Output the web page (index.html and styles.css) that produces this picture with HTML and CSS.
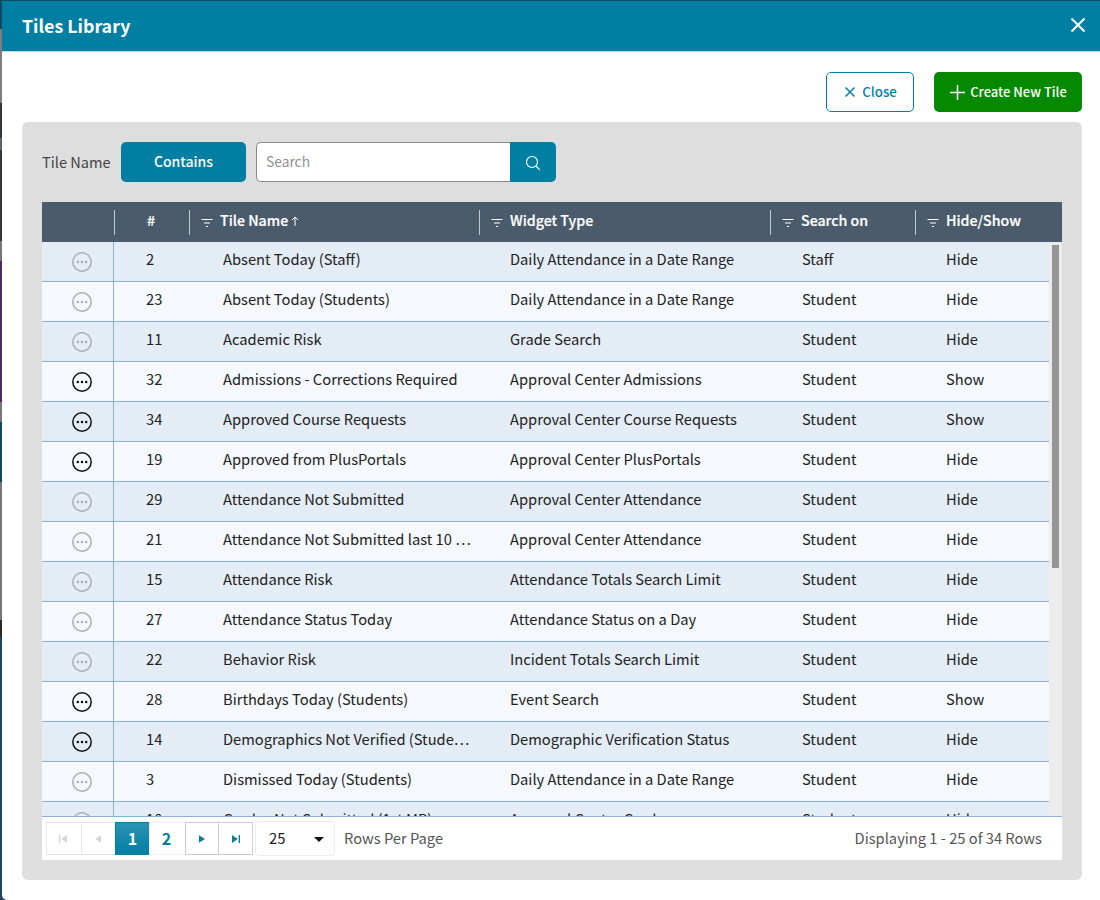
FILE: index.html
```html
<!DOCTYPE html>
<html lang="en">
<head>
<meta charset="utf-8">
<title>Tiles Library</title>
<link rel="stylesheet" href="styles.css">
</head>
<body>
<div class="modal">
  <header class="modal-head">
    <h1>Tiles Library</h1>
    <svg class="head-x" width="16" height="16" viewBox="0 0 16 16"><path d="M1.500 1.500l13 13M14.500 1.500l-13 13"/></svg>
  </header>
  <div class="actions">
    <button class="btn-close"><svg width="12" height="12" viewBox="0 0 12 12"><path d="M1.500 1.500l9 9M10.500 1.500l-9 9"/></svg><span>Close</span></button>
    <button class="btn-create"><svg width="17" height="17" viewBox="0 0 17 17"><path d="M8.500 1v15M1 8.500h15"/></svg><span>Create New Tile</span></button>
  </div>
  <section class="panel">
    <div class="filter">
      <span class="filter-label">Tile Name</span>
      <button class="contains">Contains</button>
      <div class="search">
        <span class="search-input">Search</span>
        <span class="search-btn"><svg width="16" height="16" viewBox="0 0 16 16"><circle cx="7" cy="7" r="5.500"/><path d="M11 11l3.800 3.800"/></svg></span>
      </div>
    </div>
    <div class="grid">
      <div class="thead">
        <div class="th c0"></div>
        <div class="th c1"><span class="sep"></span><span class="hash">#</span></div>
        <div class="th c2"><span class="sep"></span><svg class="flt" width="12" height="10" viewBox="0 0 12 10"><path d="M.5 1.500h11M3 5h6M5 8.500h2"/></svg>Tile Name<svg class="arrow" width="8" height="10" viewBox="0 0 8 10"><path d="M4 10V1M1 4l3-3 3 3"/></svg></div>
        <div class="th c3"><span class="sep"></span><svg class="flt" width="12" height="10" viewBox="0 0 12 10"><path d="M.5 1.500h11M3 5h6M5 8.500h2"/></svg>Widget Type</div>
        <div class="th c4"><span class="sep"></span><svg class="flt" width="12" height="10" viewBox="0 0 12 10"><path d="M.5 1.500h11M3 5h6M5 8.500h2"/></svg>Search on</div>
        <div class="th c5"><span class="sep"></span><svg class="flt" width="12" height="10" viewBox="0 0 12 10"><path d="M.5 1.500h11M3 5h6M5 8.500h2"/></svg>Hide/Show</div>
      </div>
      <div class="body">
        <div class="rows" id="rows"></div>
        <div class="scroll"><div class="thumb"></div></div>
      </div>
      <div class="pager">
        <div class="pages">
          <span class="pg dis"><svg width="8" height="8" viewBox="0 0 9 9"><path d="M0 0h1.500v9H0zM9 0v9L2.500 4.500z"/></svg></span>
          <span class="pg dis"><svg width="6" height="8" viewBox="0 0 7 9"><path d="M7 0v9L0 4.500z"/></svg></span>
          <span class="pg cur">1</span>
          <span class="pg num">2</span>
          <span class="pg nav"><svg width="6" height="8" viewBox="0 0 7 9"><path d="M0 0v9l7-4.500z"/></svg></span>
          <span class="pg nav"><svg width="8" height="8" viewBox="0 0 9 9"><path d="M0 0v9l6.500-4.500zM7.500 0H9v9H7.500z"/></svg></span>
        </div>
        <div class="size"><span>25</span><i class="caret"></i></div>
        <span class="rpp">Rows Per Page</span>
        <span class="count">Displaying 1 - 25 of 34 Rows</span>
      </div>
    </div>
  </section>
</div>
<script src="app.js"></script>
</body>
</html>
```
FILE: app.js
```js
var data = [
  [0,"2","Absent Today (Staff)","Daily Attendance in a Date Range","Staff","Hide"],
  [0,"23","Absent Today (Students)","Daily Attendance in a Date Range","Student","Hide"],
  [0,"11","Academic Risk","Grade Search","Student","Hide"],
  [1,"32","Admissions - Corrections Required","Approval Center Admissions","Student","Show"],
  [1,"34","Approved Course Requests","Approval Center Course Requests","Student","Show"],
  [1,"19","Approved from PlusPortals","Approval Center PlusPortals","Student","Hide"],
  [0,"29","Attendance Not Submitted","Approval Center Attendance","Student","Hide"],
  [0,"21","Attendance Not Submitted last 10 Days","Approval Center Attendance","Student","Hide"],
  [0,"15","Attendance Risk","Attendance Totals Search Limit","Student","Hide"],
  [0,"27","Attendance Status Today","Attendance Status on a Day","Student","Hide"],
  [0,"22","Behavior Risk","Incident Totals Search Limit","Student","Hide"],
  [1,"28","Birthdays Today (Students)","Event Search","Student","Show"],
  [1,"14","Demographics Not Verified (Students)","Demographic Verification Status","Student","Hide"],
  [0,"3","Dismissed Today (Students)","Daily Attendance in a Date Range","Student","Hide"],
  [0,"10","Grades Not Submitted (1st MP)","Approval Center Grades","Student","Hide"]
];
var icon = function (on) {
  return '<svg class="more ' + (on ? 'on' : 'off') + '" width="20" height="20" viewBox="0 0 20 20"><circle class="ring" cx="10" cy="10" r="9.200"/><circle class="dot" cx="5.800" cy="10" r="1.250"/><circle class="dot" cx="10" cy="10" r="1.250"/><circle class="dot" cx="14.200" cy="10" r="1.250"/></svg>';
};
document.getElementById('rows').innerHTML = data.map(function (r) {
  return '<div class="row"><div class="td c0">' + icon(r[0]) + '</div><div class="td c1">' + r[1] +
    '</div><div class="td c2"><span class="clip">' + r[2] + '</span></div><div class="td c3">' + r[3] +
    '</div><div class="td c4">' + r[4] + '</div><div class="td c5">' + r[5] + '</div></div>';
}).join('');
```
FILE: styles.css
```css
* { box-sizing: border-box; }
html, body { margin: 0; height: 100%; }
body {
  background: linear-gradient(to bottom,
    #0f4a5e 0 29px, #7d7d7d 29px 103px, #363636 103px 138px, #5b6672 138px 150px,
    #363636 150px 241px, #777 241px 261px, #4b2a5c 261px 402px, #777 402px 422px,
    #0d4a5a 422px 482px, #777 482px 620px, #2a2a2a 620px 637px, #1f4560 637px 900px);
  overflow: hidden;
  font-family: "Noto Sans CJK SC", "Noto Sans", sans-serif;
  font-size: 14.7px;
  color: #222;
}
.modal {
  margin: 1px 0 0 2px;
  height: 899px;
  background: #fff;
  display: flex;
  flex-direction: column;
  border-bottom-left-radius: 5px;
}
.modal-head {
  flex: none;
  height: 51px;
  background: #007fa3;
  border-bottom: 1px solid #c5d3d9;
  display: flex;
  align-items: center;
  justify-content: space-between;
  padding: 0 14px 2px 20px;
}
.modal-head h1 { margin: 0; font-size: 17.800px; line-height: 26px; font-weight: 700; color: #fff; }
.head-x path { stroke: #fff; stroke-width: 2; fill: none; }
.actions {
  flex: none;
  height: 70px;
  padding: 20px 18px 0 0;
  display: flex;
  justify-content: flex-end;
  gap: 20px;
}
button { font-family: inherit; cursor: pointer; }
.btn-close, .btn-create {
  height: 40px;
  border-radius: 5px;
  font-weight: 500;
  display: flex;
  align-items: center;
  justify-content: center;
  padding: 0;
}
.btn-close span, .btn-create span { padding-bottom: 2px; }
.btn-close { width: 88px; background: #fff; border: 1px solid #007fa3; color: #007fa3; gap: 6px; font-size: 13.3px; padding-left: 1px; }
.btn-close path { stroke: #007fa3; stroke-width: 1.500; fill: none; }
.btn-create { width: 148px; background: #058900; border: 0; color: #fff; gap: 4px; font-size: 13px; }
.btn-create path { stroke: #fff; stroke-width: 1.500; fill: none; }
.panel {
  margin: 0 18px 0 20px;
  height: 758px;
  background: #dedede;
  border-radius: 6px;
  padding: 20px;
}
.filter { display: flex; align-items: center; height: 40px; }
.filter-label { width: 79px; font-size: 14.6px; color: #444; padding-bottom: 2px; }
.contains {
  width: 125px;
  height: 40px;
  border: 0;
  border-radius: 5px;
  background: #007fa3;
  color: #fff;
  font-size: 14px;
  font-weight: 500;
  padding: 0 0 2px;
}
.search { margin-left: 10px; width: 300px; height: 40px; display: flex; }
.search-input {
  flex: 1;
  background: #fff;
  border: 1px solid #8a8a8a;
  border-right: 0;
  border-radius: 5px 0 0 5px;
  padding: 0 9px;
  line-height: 36px;
  font-size: 13.800px;
  color: #8f8f8f;
}
.search-btn {
  width: 46px;
  background: #007fa3;
  border-radius: 0 5px 5px 0;
  display: flex;
  align-items: center;
  justify-content: center;
  padding-top: 1px;
}
.search-btn circle, .search-btn path { stroke: #fff; stroke-width: 1.200; fill: none; }
.grid { margin-top: 20px; }
.thead { display: flex; height: 40px; background: #4a5b6c; color: #fff; font-weight: 500; font-size: 14.2px; -webkit-text-stroke: .2px #fff; }
.th { display: flex; align-items: center; position: relative; line-height: 20px; padding-bottom: 4px; }
.sep { position: absolute; left: 0; top: 8px; height: 25px; width: 1px; background: #c3cad0; }
.flt { margin-right: 7px; margin-top: 5px; }
.flt path { stroke: #fff; stroke-width: 1.200; fill: none; }
.arrow { margin-left: 3px; margin-top: 2px; }
.arrow path { stroke: #fff; stroke-width: 1; fill: none; }
.th.c0 { width: 72px; }
.th.c1 { width: 75px; padding-left: 33px; }
.th.c2 { width: 290px; padding-left: 12px; }
.th.c3 { width: 291px; padding-left: 12px; }
.th.c4 { width: 145px; padding-left: 12px; }
.th.c5 { flex: 1; padding-left: 12px; }
.body { display: flex; height: 574px; overflow: hidden; background: #fff; }
.rows { width: 1007px; flex: none; }
.row {
  display: flex;
  height: 40px;
  border-bottom: 1px solid #8fb0d6;
  background: #f5f9fd;
  line-height: 20px;
  color: #222;
}
.row:nth-child(odd) { background: #e4ecf6; }
.td { display: flex; align-items: center; height: 39px; padding-bottom: 5px; white-space: nowrap; }
.td.c0 { width: 72px; border-right: 1px solid #8fb0d6; padding: 1px 0 0 30px; }
.td.c1 { width: 75px; padding-left: 32px; }
.td.c2 { width: 321px; padding-left: 34px; padding-right: 39px; }
.td.c3 { width: 292px; }
.td.c4 { width: 144px; }
.td.c5 { flex: 1; }
.clip { display: block; width: 100%; overflow: hidden; text-overflow: ellipsis; font-feature-settings: "pwid" 1; }
.more { display: block; }
.more .ring { fill: none; stroke-width: 1.500; }
.more.off .ring { stroke: #a9adb2; }
.more.off .dot { fill: #a9adb2; }
.more.on .ring { stroke: #111; }
.more.on .dot { fill: #111; }
.scroll { flex: 1; background: #ececec; padding: 3px 3px 0 3px; }
.thumb { height: 323px; background: #969696; }
.pager {
  height: 44px;
  background: #fff;
  border-top: 1px solid #8fb0d6;
  display: flex;
  align-items: center;
  padding: 0 20px 0 4px;
  color: #555;
}
.pages { display: flex; height: 33px; }
.pg { width: 34px; height: 33px; display: flex; align-items: center; justify-content: center; border: 1px solid #e6e6e6; border-right: 0; font-weight: 700; font-size: 16px; padding-bottom: 2px; }
.pg:first-child { width: 35px; }
.pg.dis { padding-right: 2px; }
.pg.dis svg { fill: #d5d5d5; margin-top: 2px; }
.pg.cur { background: linear-gradient(#2a93b3, #007fa3); color: #fff; border-color: #007fa3; }
.pg.num { width: 35px; color: #007fa3; border-color: #f0f0f0; padding-right: 1px; }
.pg.nav { border-color: #ccc; border-right: 1px solid #ccc; }
.pg.num + .pg.nav { margin-left: 1px; }
.pg.nav + .pg.nav { border-left: 0; }
.pg.nav svg { fill: #007fa3; margin-top: 2px; }
.size {
  margin-left: 2px;
  width: 80px;
  height: 35px;
  border: 1px solid #ececec;
  border-radius: 4px;
  display: flex;
  align-items: center;
  justify-content: space-between;
  padding: 0 10px 3px 13px;
  color: #222;
}
.caret { width: 0; height: 0; border: 5px solid transparent; border-top-color: #111; border-bottom: 0; margin-top: 4px; }
.rpp { margin-left: 9px; padding-bottom: 3px; }
.count { margin-left: auto; padding-bottom: 3px; }
```
